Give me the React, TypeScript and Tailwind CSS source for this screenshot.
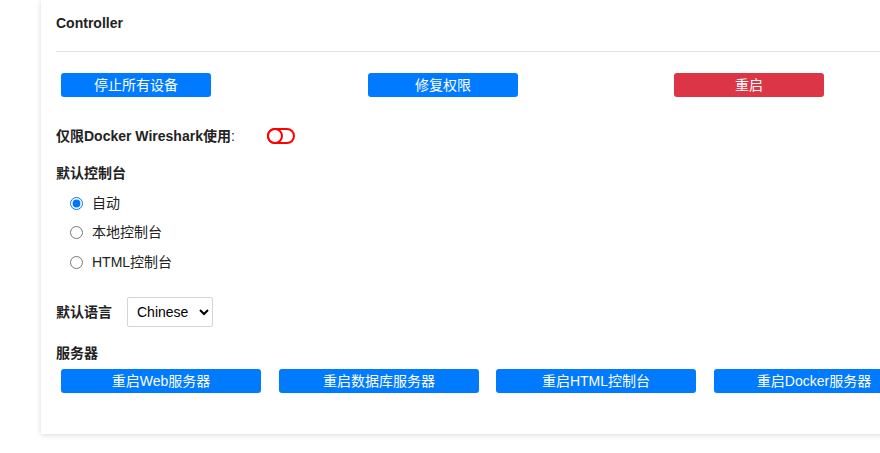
import { useState } from "react";

const FONT = "font-['Liberation_Sans','Noto_Sans_CJK_SC',sans-serif]";

const topActions = [
  { label: "停止所有设备", danger: false },
  { label: "修复权限", danger: false },
  { label: "重启", danger: true },
];

const serverActions = [
  "重启Web服务器",
  "重启数据库服务器",
  "重启HTML控制台",
  "重启Docker服务器",
];

const consoles = ["自动", "本地控制台", "HTML控制台"];

const Toggle = ({ on, onClick }: { on: boolean; onClick: () => void }) => (
  <button
    onClick={onClick}
    className="relative w-[28px] h-[16px] rounded-full border-2 border-[#ff0000] bg-white"
  >
    <span
      className={
        on
          ? "absolute top-[-2px] right-[-2px] w-[16px] h-[16px] rounded-full border-2 border-[#ff0000] bg-white"
          : "absolute top-[-2px] left-[-2px] w-[16px] h-[16px] rounded-full border-2 border-[#ff0000] bg-white"
      }
    />
  </button>
);

const Controller = () => {
  const [wireshark, setWireshark] = useState(false);
  const [consoleMode, setConsoleMode] = useState("自动");
  const [lang, setLang] = useState("Chinese");

  return (
    <div className={`min-h-[453px] bg-white overflow-hidden ${FONT}`}>
      <div className="ml-[41px] w-[900px] bg-white shadow-[0_1px_6px_rgba(0,0,0,0.15)] pb-[41px]">
        <div className="pl-[15px]">
          <h3 className="pt-[14px] text-[14px] leading-[18px] font-bold text-[#222]">
            Controller
          </h3>
          <div className="mt-[19px] h-px bg-[#e2e2e2]" />

          <div className="mt-[21px] grid grid-cols-[307px_306px_306px]">
            {topActions.map((a) => (
              <div key={a.label} className="pl-[5px]">
                <button
                  className={
                    a.danger
                      ? "w-[150px] h-[24px] rounded-[3px] bg-[#dc3545] text-white text-[14px] leading-[24px]"
                      : "w-[150px] h-[24px] rounded-[3px] bg-[#007bff] text-white text-[14px] leading-[24px]"
                  }
                >
                  {a.label}
                </button>
              </div>
            ))}
          </div>

          <div className="mt-[29px] h-[20px] flex items-center text-[14px] font-bold text-[#222]">
            <span className="w-[211px]">
              仅限Docker Wireshark使用<span className="font-normal">:</span>
            </span>
            <Toggle on={wireshark} onClick={() => setWireshark((v) => !v)} />
          </div>

          <div className="mt-[18px] text-[14px] leading-[18px] font-bold text-[#222]">
            默认控制台
          </div>
          <div className="mt-[11px] pl-[14px] flex flex-col gap-[9.5px]">
            {consoles.map((c) => (
              <label
                key={c}
                className="h-[20px] flex items-center text-[14px] text-[#222]"
              >
                <input
                  type="radio"
                  name="console"
                  checked={consoleMode === c}
                  onChange={() => setConsoleMode(c)}
                  className="m-0 w-[13px] h-[13px] mr-[9px]"
                />
                {c}
              </label>
            ))}
          </div>

          <div className="mt-[25px] flex items-center h-[30px]">
            <span className="w-[71px] text-[14px] font-bold text-[#222]">
              默认语言
            </span>
            <select
              value={lang}
              onChange={(e) => setLang(e.target.value)}
              className="w-[86px] h-[30px] border border-[#d4d4d4] rounded-[2px] pl-[5px] text-[14px] text-black bg-white"
            >
              <option>Chinese</option>
              <option>English</option>
            </select>
          </div>

          <div className="mt-[17px] text-[14px] leading-[18px] font-bold text-[#222]">
            服务器
          </div>
          <div className="mt-[7px] grid grid-cols-[218px_217px_218px_217px]">
            {serverActions.map((s) => (
              <div key={s} className="pl-[5px]">
                <button className="w-[200px] h-[24px] rounded-[3px] bg-[#007bff] text-white text-[14px] leading-[24px]">
                  {s}
                </button>
              </div>
            ))}
          </div>
        </div>
      </div>
    </div>
  );
};

export default function App() {
  return <Controller />;
}
